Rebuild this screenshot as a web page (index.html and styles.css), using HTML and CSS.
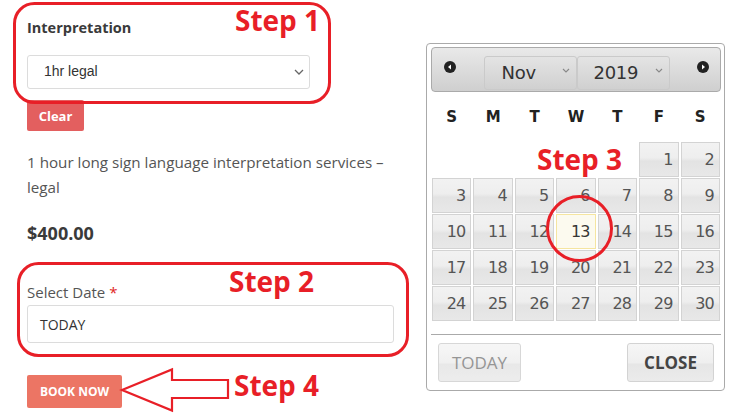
FILE: index.html
```html
<!DOCTYPE html>
<html>
<head>
<meta charset="utf-8">
<link rel="stylesheet" href="styles.css">
</head>
<body>
<div class="page">
  <div class="form">
    <div class="field-title">Interpretation</div>
    <div class="select">
      <span>1hr legal</span>
      <svg class="chev" width="10" height="6" viewBox="0 0 10 6"><path d="M1 1 L5 5 L9 1" fill="none" stroke="#666" stroke-width="1.3"/></svg>
    </div>
    <div class="clear">Clear</div>
    <p class="desc">1 hour long sign language interpretation services – legal</p>
    <p class="price">$400.00</p>
    <div class="date-label">Select Date <span class="req">*</span></div>
    <div class="date-input">TODAY</div>
    <div class="book">BOOK NOW</div>
  </div>

  <div class="picker">
    <div class="dp-head">
      <span class="nav"><svg width="12" height="12" viewBox="0 0 12 12"><circle cx="6" cy="6" r="6" fill="#222"/><path d="M4 6 L7 3.5 L7 8.5 Z" fill="#fff"/></svg></span>
      <div class="dp-selects">
        <div class="dp-sel month"><span>Nov</span><svg width="8" height="5" viewBox="0 0 8 5"><path d="M1 1 L4 4 L7 1" fill="none" stroke="#888" stroke-width="1.1"/></svg></div>
        <div class="dp-sel year"><span>2019</span><svg width="8" height="5" viewBox="0 0 8 5"><path d="M1 1 L4 4 L7 1" fill="none" stroke="#888" stroke-width="1.1"/></svg></div>
      </div>
      <span class="nav"><svg width="12" height="12" viewBox="0 0 12 12"><circle cx="6" cy="6" r="6" fill="#222"/><path d="M8 6 L5 3.5 L5 8.5 Z" fill="#fff"/></svg></span>
    </div>
    <div class="dow">
      <span>S</span><span>M</span><span>T</span><span>W</span><span>T</span><span>F</span><span>S</span>
    </div>
    <div class="days">
      <span class="empty"></span><span class="empty"></span><span class="empty"></span><span class="empty"></span><span class="empty"></span>
      <span>1</span><span>2</span>
      <span>3</span><span>4</span><span>5</span><span>6</span><span>7</span><span>8</span><span>9</span>
      <span>10</span><span>11</span><span>12</span><span class="today">13</span><span>14</span><span>15</span><span>16</span>
      <span>17</span><span>18</span><span>19</span><span>20</span><span>21</span><span>22</span><span>23</span>
      <span>24</span><span>25</span><span>26</span><span>27</span><span>28</span><span>29</span><span>30</span>
    </div>
    <div class="dp-foot">
      <div class="dp-btn disabled">TODAY</div>
      <div class="dp-btn strong">CLOSE</div>
    </div>
  </div>

  <svg class="marks" width="747" height="417" viewBox="0 0 747 417">
    <rect x="14.5" y="3.5" width="315" height="99" rx="20" ry="20" fill="none" stroke="#e81f27" stroke-width="3"/>
    <rect x="18.5" y="263.5" width="389" height="92" rx="20" ry="20" fill="none" stroke="#e81f27" stroke-width="3"/>
    <circle cx="579.5" cy="228.5" r="32" fill="none" stroke="#e81f27" stroke-width="3"/>
    <polygon points="122,390 172,369.5 172,380 228,380 228,398 172,398 172,410.5" fill="none" stroke="#e81f27" stroke-width="2.2" stroke-linejoin="miter"/>
  </svg>
  <div class="step s1">Step 1</div>
  <div class="step s2">Step 2</div>
  <div class="step s3">Step 3</div>
  <div class="step s4">Step 4</div>
</div>
</body>
</html>
```
FILE: styles.css
```css
* { box-sizing: border-box; }
html, body { margin: 0; padding: 0; background: #fff; }
body { font-family: "Open Sans", "Noto Sans", sans-serif; color: #555; }

.page {
  position: relative;
  width: 747px;
  height: 417px;
  display: flex;
  align-items: flex-start;
  overflow: hidden;
}

.form {
  width: 399px;
  padding-left: 27px;
  display: flex;
  flex-direction: column;
  align-items: flex-start;
}

.field-title {
  margin-top: 18px;
  font-size: 14.5px;
  line-height: 20px;
  font-weight: 700;
  color: #3a3a3a;
}

.select {
  margin-top: 17px;
  width: 283px;
  height: 34px;
  border: 1px solid #dcdcdc;
  border-radius: 3px;
  display: flex;
  align-items: center;
  justify-content: space-between;
  padding: 0 5px 0 16px;
  font-family: "Liberation Sans", Arial, sans-serif;
  font-size: 14px;
  color: #333;
}
.select span { position: relative; top: -1px; }

.clear {
  margin-top: 11px;
  height: 31px;
  width: 57px;
  background: #e35f5f;
  border-radius: 2px;
  color: #fff;
  font-weight: 700;
  font-size: 13px;
  display: flex;
  align-items: center;
  justify-content: center;
}

.desc {
  margin: 19px 0 0;
  font-size: 15.2px;
  line-height: 25px;
  width: 372px;
  color: #555;
}

.price {
  margin: 19px 0 0;
  font-size: 18px;
  line-height: 28px;
  font-weight: 700;
  color: #3a3a3a;
}

.date-label {
  margin-top: 35px;
  font-size: 15px;
  line-height: 20px;
  color: #555;
}
.req { color: #e02424; }

.date-input {
  margin-top: 3px;
  width: 367px;
  height: 38px;
  border: 1px solid #dcdcdc;
  border-radius: 3px;
  padding: 0 12px;
  display: flex;
  align-items: center;
  font-size: 14px;
  color: #333;
}

.book {
  margin-top: 32px;
  width: 95px;
  height: 33px;
  background: #ec7564;
  border-radius: 2px;
  color: #fff;
  font-weight: 700;
  font-size: 12px;
  display: flex;
  align-items: center;
  justify-content: center;
}

/* datepicker */
.picker {
  margin-top: 43px;
  margin-left: 27px;
  width: 299px;
  height: 348px;
  border: 1px solid #aaa;
  border-radius: 4px;
  padding: 3px 3px 0 4px;
  font-family: "DejaVu Sans", Verdana, sans-serif;
}

.dp-head {
  height: 45px;
  border: 1px solid #aaa;
  border-radius: 4px;
  background: linear-gradient(#e9e9e9, #cfcfcf);
  display: flex;
  align-items: center;
  justify-content: space-between;
  padding: 0 11px 6px 12px;
}
.nav { display: flex; }

.dp-selects { display: flex; margin-top: 12px; }
.dp-sel {
  height: 34px;
  width: 93px;
  border: 1px solid #cacaca;
  border-radius: 3px;
  display: flex;
  align-items: center;
  justify-content: space-between;
  padding: 0 6px 0 0;
  font-size: 18px;
  color: #333;
  letter-spacing: -0.3px;
}
.dp-sel.month { padding-left: 17px; }
.dp-sel.year { padding-left: 16px; }
.dp-sel svg { margin-top: -4px; }

.dow {
  height: 50px;
  margin: 0 0 0 1px;
  width: 288px;
  display: grid;
  grid-template-columns: repeat(7, 1fr);
  column-gap: 2px;
  align-items: center;
  font-weight: 700;
  font-size: 15px;
  color: #222;
  text-align: center;
}

.days {
  margin-left: 1px;
  width: 288px;
  display: grid;
  grid-template-columns: repeat(7, 1fr);
  grid-auto-rows: 35px;
  column-gap: 2px;
  row-gap: 1px;
}
.days span {
  border: 1px solid #d3d3d3;
  background: linear-gradient(#f2f2f2 0%, #eeeeee 45%, #e3e3e3 55%, #e8e8e8 100%);
  text-align: right;
  padding: 0 5px 0 0;
  font-size: 16px;
  line-height: 34px;
  color: #555;
  letter-spacing: -0.8px;
}
.days span.empty { border: none; background: none; }
.days span.today {
  background: #fcfaef;
  border-color: #f5e5a0;
  color: #363636;
}

.dp-foot {
  margin-top: 13px;
  border-top: 1px solid #aaa;
  width: 290px;
  display: flex;
  justify-content: space-between;
  padding: 8px 7px 0;
}
.dp-btn {
  height: 39px;
  border: 1px solid #d3d3d3;
  border-radius: 3px;
  background: linear-gradient(#f6f6f6 0%, #efefef 50%, #e6e6e6 55%, #ebebeb 100%);
  display: flex;
  align-items: center;
  justify-content: center;
  font-size: 17px;
  font-family: "Open Sans", sans-serif;
}
.dp-btn.disabled { width: 83px; color: #8a8a8a; opacity: 0.9; }
.dp-btn.strong { width: 87px; color: #444; font-weight: 700; }

/* annotations */
.marks { position: absolute; left: 0; top: 0; pointer-events: none; }
.step {
  position: absolute;
  font-family: "Open Sans", sans-serif;
  font-weight: 700;
  font-size: 28px;
  line-height: 22px;
  color: #e81f27;
  white-space: nowrap;
}
.s1 { left: 235px; top: 9px; }
.s2 { left: 229px; top: 270px; }
.s3 { left: 537px; top: 148px; }
.s4 { left: 234px; top: 374px; }
```
